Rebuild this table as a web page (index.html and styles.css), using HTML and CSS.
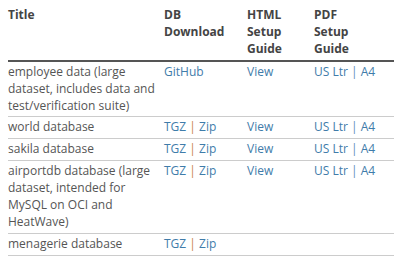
FILE: index.html
```html
<!DOCTYPE html>
<html>
<head>
<meta charset="utf-8">
<link rel="stylesheet" href="styles.css">
</head>
<body>
<div class="wrap">
<table class="dl">
  <thead>
    <tr>
      <th class="c1">Title</th>
      <th class="c2">DB<br>Download</th>
      <th class="c3">HTML<br>Setup<br>Guide</th>
      <th class="c4">PDF<br>Setup<br>Guide</th>
    </tr>
  </thead>
  <tbody>
    <tr>
      <td>employee data (large dataset, includes data and test/verification suite)</td>
      <td><a>GitHub</a></td>
      <td><a>View</a></td>
      <td><a>US Ltr</a> <span class="bar blue">|</span> <a>A4</a></td>
    </tr>
    <tr>
      <td>world database</td>
      <td><a>TGZ</a> <span class="bar">|</span> <a>Zip</a></td>
      <td><a>View</a></td>
      <td><a>US Ltr</a> <span class="bar blue">|</span> <a>A4</a></td>
    </tr>
    <tr>
      <td>sakila database</td>
      <td><a>TGZ</a> <span class="bar">|</span> <a>Zip</a></td>
      <td><a>View</a></td>
      <td><a>US Ltr</a> <span class="bar blue">|</span> <a>A4</a></td>
    </tr>
    <tr>
      <td>airportdb database (large dataset, intended for MySQL on OCI and HeatWave)</td>
      <td><a>TGZ</a> <span class="bar">|</span> <a>Zip</a></td>
      <td><a>View</a></td>
      <td><a>US Ltr</a> <span class="bar blue">|</span> <a>A4</a></td>
    </tr>
    <tr>
      <td>menagerie database</td>
      <td><a>TGZ</a> <span class="bar">|</span> <a>Zip</a></td>
      <td></td>
      <td></td>
    </tr>
  </tbody>
</table>
</div>
</body>
</html>
```
FILE: styles.css
```css
html, body {
  margin: 0;
  padding: 0;
  background: #fff;
}
.wrap {
  padding: 5px 0 0 8px;
}
.dl {
  width: 100%;
  border-collapse: collapse;
  font-family: "Open Sans", "Liberation Sans", sans-serif;
  font-size: 12px;
  line-height: 16.9px;
  color: #555;
  table-layout: fixed;
}
.dl th, .dl td {
  text-align: left;
  vertical-align: top;
  padding: 2px 6px 2px 0;
}
.dl th {
  font-weight: 700;
  color: #444;
  border-bottom: 2px solid #555;
}
.dl td {
  border-bottom: 1px solid #ccc;
}
.c1 { width: 150px; }
.c2 { width: 77px; }
.c3 { width: 61px; }
.dl a {
  color: #3f7caa;
}
.bar {
  color: #c8824f;
}
.bar.blue {
  color: #5b8fbb;
}
```
